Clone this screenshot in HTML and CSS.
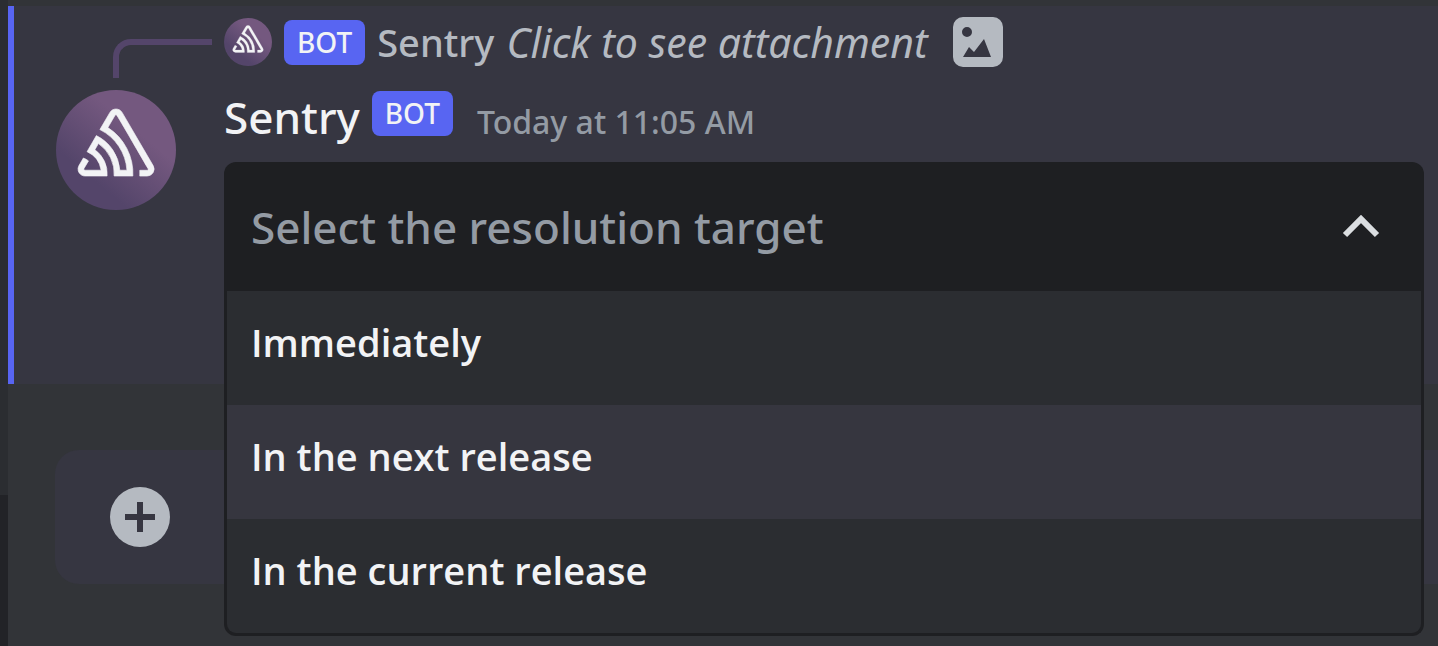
FILE: index.html
```html
<!DOCTYPE html>
<html lang="en">
<head>
  <meta charset="UTF-8">
  <title>Sentry Bot</title>
  <link rel="stylesheet" href="styles.css">
</head>
<body>
  <!-- Shared Sentry avatar -->
  <svg class="sprite" aria-hidden="true">
    <defs>
      <linearGradient id="avatar-fill" x1="0.25" y1="0.8" x2="0.75" y2="0.2">
        <stop offset="0.1" stop-color="#54456a"/>
        <stop offset="0.8" stop-color="#74587f"/>
      </linearGradient>
      <symbol id="sentry-avatar" viewBox="0 0 120 120">
        <circle cx="60" cy="60" r="60" fill="url(#avatar-fill)"/>
        <path transform="translate(22 14.5) scale(3.17)" fill="#f2f3f5" stroke="#f2f3f5" stroke-width="0.2" d="M13.91 2.505c-.873-1.448-2.972-1.448-3.844 0L6.904 7.92a15.478 15.478 0 0 1 8.53 12.811h-2.221A13.301 13.301 0 0 0 5.784 9.814l-2.926 5.06a7.65 7.65 0 0 1 4.435 5.848H2.194a.365.365 0 0 1-.298-.534l1.413-2.402a5.16 5.16 0 0 0-1.614-.913L.296 19.275a2.182 2.182 0 0 0 .812 2.999 2.24 2.24 0 0 0 1.086.288h6.983a9.322 9.322 0 0 0-3.845-8.318l1.11-1.922a11.47 11.47 0 0 1 4.95 10.24h5.915a17.242 17.242 0 0 0-7.885-15.28l2.244-3.845a.37.37 0 0 1 .504-.13c.255.14 9.75 16.708 9.928 16.9a.365.365 0 0 1-.327.543h-2.287c.029.612.029 1.223 0 1.831h2.297a2.206 2.206 0 0 0 1.922-3.31z"/>
      </symbol>
    </defs>
  </svg>

  <div class="app">
    <aside class="sidebar">
      <div class="channels"></div>
      <div class="user-panel"></div>
    </aside>

    <main class="chat">
      <!-- Message -->
      <article class="message">
        <div class="reply-spine"></div>
        <div class="reply">
          <svg class="reply-avatar" aria-hidden="true"><use href="#sentry-avatar"/></svg>
          <span class="bot-tag">BOT</span>
          <span class="reply-name">Sentry</span>
          <a href="#" class="reply-link">Click to see attachment</a>
          <svg class="image-icon" viewBox="0 0 50 50" aria-hidden="true">
            <path fill="#b5bac1" fill-rule="evenodd" d="M10 0h30a10 10 0 0 1 10 10v30a10 10 0 0 1-10 10H10A10 10 0 0 1 0 40V10A10 10 0 0 1 10 0zm4 10a5 5 0 1 0 0 10 5 5 0 0 0 0-10zM10 40h28l-7-18-10 13-5-5z"/>
          </svg>
        </div>

        <svg class="avatar" role="img" aria-label="Sentry"><use href="#sentry-avatar"/></svg>
        <div class="message-body">
          <header class="message-header">
            <h3 class="username">Sentry</h3>
            <span class="bot-tag">BOT</span>
            <time class="timestamp">Today at 11:05 AM</time>
          </header>

          <div class="dropdown">
            <button type="button" class="dropdown-toggle" id="target-toggle" aria-expanded="true" aria-controls="target-list">
              <span>Select the resolution target</span>
              <svg class="chevron" viewBox="0 0 48 48" aria-hidden="true">
                <path d="M8 32 24 16l16 16" fill="none" stroke="#dbdee1" stroke-width="6"/>
              </svg>
            </button>
            <select class="dropdown-list" id="target-list" size="3" aria-labelledby="target-toggle">
              <option>Immediately</option>
              <option class="hovered">In the next release</option>
              <option>In the current release</option>
            </select>
          </div>
        </div>
      </article>

      <!-- Composer -->
      <div class="composer">
        <button type="button" class="attach-btn" aria-label="Add attachment">
          <svg viewBox="0 0 60 60" aria-hidden="true">
            <circle cx="30" cy="30" r="30" fill="#b5bac1"/>
            <path d="M27 15h6v12h12v6H33v12h-6V33H15v-6h12z" fill="#363641"/>
          </svg>
        </button>
      </div>
    </main>
  </div>
</body>
</html>
```
FILE: styles.css
```css
/* Global styles */
* {
  margin: 0;
  padding: 0;
  box-sizing: border-box;
}

:root {
  --bg-color: #323438;
  --bg-side: #2b2d31;
  --bg-panel: #222327;
  --bg-message: #363641;
  --bg-dark: #1e1f22;
  --accent-color: #5865f2;
  --text-color: #f2f3f5;
  --text-muted: #949ba4;
  --text-reply: #b5bac1;
}

body {
  background-color: var(--bg-color);
  color: var(--text-color);
  font-family: "Noto Sans", "Open Sans", sans-serif;
  overflow: hidden;
}

button,
select {
  border: none;
  font-family: inherit;
  cursor: pointer;
}

.sprite {
  display: block;
  width: 0;
  height: 0;
}

.app {
  display: flex;
  height: 100vh;
}

/* Sidebar edge */
.sidebar {
  display: flex;
  flex-direction: column;
  width: 8px;
}

.channels {
  flex: 1;
  background-color: var(--bg-side);
}

.user-panel {
  height: 151px;
  background-color: var(--bg-panel);
}

.chat {
  flex: 1;
  min-width: 0;
  padding-top: 6px;
}

/* Message */
.message {
  display: grid;
  grid-template-columns: 120px 1fr;
  column-gap: 48px;
  padding: 10px 14px 93px 42px;
  border-left: 6px solid var(--accent-color);
  background-color: var(--bg-message);
}

.reply-spine {
  justify-self: end;
  align-self: end;
  width: 99px;
  height: 39px;
  margin-right: -36px;
  margin-bottom: -10px;
  border-top: 6px solid #54456a;
  border-left: 6px solid #54456a;
  border-top-left-radius: 18px;
}

.reply {
  display: flex;
  align-items: center;
  gap: 12px;
  height: 52px;
  color: var(--text-reply);
}

.reply-avatar {
  width: 48px;
  height: 48px;
}

.reply-name {
  font-size: 38px;
  font-weight: 500;
}

.reply-link {
  color: inherit;
  font-size: 41px;
  font-style: italic;
  text-decoration: none;
}

.image-icon {
  width: 50px;
  height: 50px;
  margin-left: 13px;
}

.bot-tag {
  padding: 0 13px;
  border-radius: 8px;
  background-color: var(--accent-color);
  color: var(--text-color);
  font-size: 28px;
  font-weight: 500;
  line-height: 45px;
}

.avatar {
  width: 120px;
  height: 120px;
  margin-top: 22px;
}

.message-header {
  display: flex;
  align-items: baseline;
  gap: 12px;
  height: 94px;
  padding-top: 23px;
}

.message-header .bot-tag {
  align-self: flex-start;
}

.username {
  font-size: 44px;
  font-weight: 500;
  line-height: 52px;
}

.timestamp {
  margin-left: 12px;
  color: var(--text-muted);
  font-size: 32px;
  font-weight: 500;
}

/* Dropdown */
.dropdown {
  position: relative;
}

.dropdown-toggle {
  display: flex;
  justify-content: space-between;
  align-items: center;
  width: 100%;
  height: 129px;
  padding: 0 39px 0 27px;
  border-radius: 12px 12px 0 0;
  background-color: var(--bg-dark);
  color: var(--text-muted);
  font-size: 44px;
  font-weight: 500;
}

.chevron {
  width: 48px;
  height: 48px;
}

.dropdown-list {
  position: absolute;
  top: 100%;
  left: 0;
  width: 100%;
  height: 345px;
  border: 3px solid var(--bg-dark);
  border-top: none;
  border-radius: 0 0 12px 12px;
  background-color: var(--bg-side);
  color: var(--text-color);
  font-family: "Open Sans", sans-serif;
  font-size: 38px;
  overflow: hidden;
  outline: none;
}

.dropdown-list option {
  height: 114px;
  padding: 25px 24px 0;
  font-weight: 600;
}

.dropdown-list option:hover,
.dropdown-list .hovered {
  background-color: #36363f;
}

/* Composer */
.composer {
  display: flex;
  align-items: center;
  height: 134px;
  margin: 66px 0 0 47px;
  padding-left: 55px;
  border-radius: 24px 0 0 24px;
  background-color: var(--bg-message);
}

.attach-btn {
  width: 60px;
  height: 60px;
  background: none;
}

.attach-btn svg {
  display: block;
}
```
